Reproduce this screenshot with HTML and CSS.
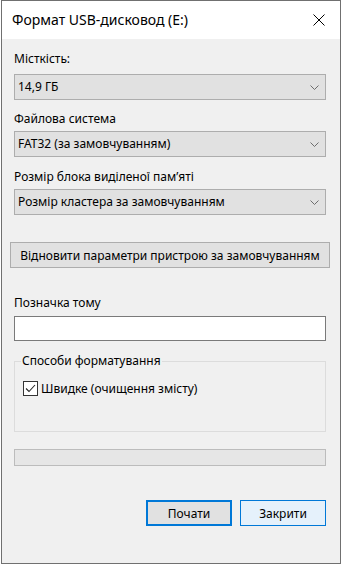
FILE: index.html
```html
<!DOCTYPE html>
<html lang="uk">
<head>
  <meta charset="UTF-8">
  <meta name="viewport" content="width=device-width, initial-scale=1.0">
  <title>Формат USB-дисковод (E:)</title>
  <link rel="stylesheet" href="styles.css">
</head>
<body>
  <div class="dialog">
    <div class="title-bar">
      <div class="title">Формат USB-дисковод (E:)</div>
      <div class="close-btn">
        <svg width="12" height="12" viewBox="0 0 12 12">
          <path d="M0.5 0.5 L11.5 11.5 M11.5 0.5 L0.5 11.5" stroke="#000" stroke-width="1" fill="none"/>
        </svg>
      </div>
    </div>

    <div class="dialog-body">
      <div class="field-label first">Місткість:</div>
      <div class="combo">
        <span class="combo-value">14,9 ГБ</span>
        <svg class="chevron" width="9" height="5" viewBox="0 0 9 5"><path d="M0.5 0.5 L4.5 4.5 L8.5 0.5" stroke="#6d6d6d" fill="none"/></svg>
      </div>

      <div class="field-label tight">Файлова система</div>
      <div class="combo">
        <span class="combo-value">FAT32 (за замовчуванням)</span>
        <svg class="chevron" width="9" height="5" viewBox="0 0 9 5"><path d="M0.5 0.5 L4.5 4.5 L8.5 0.5" stroke="#6d6d6d" fill="none"/></svg>
      </div>

      <div class="field-label">Розмір блока виділеної пам’яті</div>
      <div class="combo">
        <span class="combo-value">Розмір кластера за замовчуванням</span>
        <svg class="chevron" width="9" height="5" viewBox="0 0 9 5"><path d="M0.5 0.5 L4.5 4.5 L8.5 0.5" stroke="#6d6d6d" fill="none"/></svg>
      </div>

      <button class="reset-button">Відновити параметри пристрою за замовчуванням</button>

      <div class="field-label volume-label">Позначка тому</div>
      <div class="text-input"></div>

      <fieldset class="group-box">
        <legend>Способи форматування</legend>
        <label class="check-row">
          <span class="check-box">
            <svg width="13" height="13" viewBox="0 0 13 13"><path d="M2 6.5 L5 9.5 L11 3" stroke="#262626" stroke-width="1.1" fill="none"/></svg>
          </span>
          <span class="check-text">Швидке (очищення змісту)</span>
        </label>
      </fieldset>

      <div class="progress-bar"></div>

      <div class="dialog-buttons">
        <button class="btn btn-default">Почати</button>
        <button class="btn btn-hover">Закрити</button>
      </div>
    </div>
  </div>
</body>
</html>
```

FILE: styles.css
```css
* {
  margin: 0;
  padding: 0;
  box-sizing: border-box;
}

body {
  background-color: #ffffff;
  font-family: 'Noto Sans', 'DejaVu Sans', sans-serif;
  font-size: 12px;
  color: #000;
  overflow: hidden;
  height: 100vh;
}

.dialog {
  width: 340px;
  height: 564px;
  margin-left: 1px;
  border: 1px solid #707070;
  background-color: #f0f0f0;
  display: flex;
  flex-direction: column;
}

.title-bar {
  height: 38px;
  background-color: #ffffff;
  display: flex;
  align-items: center;
  justify-content: space-between;
  padding-left: 10px;
}

.title {
  font-size: 14px;
  line-height: 20px;
}

.close-btn {
  width: 42px;
  height: 38px;
  display: flex;
  align-items: center;
  justify-content: center;
}

.dialog-body {
  display: flex;
  flex-direction: column;
  padding: 0 14px 0 12px;
}

.field-label {
  line-height: 16px;
  height: 16px;
  white-space: nowrap;
  margin-top: 12px;
  margin-bottom: 4px;
}

.field-label.first {
  margin-top: 12px;
  margin-bottom: 7px;
}

.field-label.tight {
  margin-top: 11px;
}

.combo {
  height: 26px;
  background-color: #e1e1e1;
  border: 1px solid #adadad;
  display: flex;
  align-items: center;
  justify-content: space-between;
  padding: 0 6px 0 3px;
}

.combo-value {
  line-height: 16px;
  white-space: nowrap;
}

.chevron {
  display: block;
}

.reset-button {
  margin: 27px -4px 0 -4px;
  height: 26px;
  background-color: #e1e1e1;
  border: 1px solid #adadad;
  font-family: inherit;
  font-size: 12px;
  color: #000;
  white-space: nowrap;
}

.field-label.volume-label {
  margin-top: 27px;
  margin-bottom: 5px;
}

.text-input {
  height: 25px;
  background-color: #ffffff;
  border: 1px solid #7a7a7a;
}

.group-box {
  margin-top: 12px;
  border: 1px solid #dcdcdc;
  padding: 12px 0 35px 8px;
}

.group-box legend {
  line-height: 16px;
  margin-left: -2px;
  padding: 0 1px;
}

.check-row {
  display: flex;
  align-items: center;
  height: 15px;
}

.check-box {
  width: 15px;
  height: 15px;
  border: 1px solid #333333;
  background-color: #ffffff;
  display: flex;
  align-items: center;
  justify-content: center;
  margin-right: 3px;
}

.check-text {
  line-height: 16px;
  white-space: nowrap;
}

.progress-bar {
  margin-top: 17px;
  height: 17px;
  background-color: #e6e6e6;
  border: 1px solid #bcbcbc;
}

.dialog-buttons {
  margin-top: 34px;
  display: flex;
  justify-content: flex-end;
  gap: 8px;
}

.btn {
  width: 86px;
  height: 26px;
  font-family: inherit;
  font-size: 12px;
  color: #000;
}

.btn-default {
  background-color: #e1e1e1;
  border: 2px solid #0078d7;
}

.btn-hover {
  background-color: #e5f1fb;
  border: 1px solid #0078d7;
}
```
